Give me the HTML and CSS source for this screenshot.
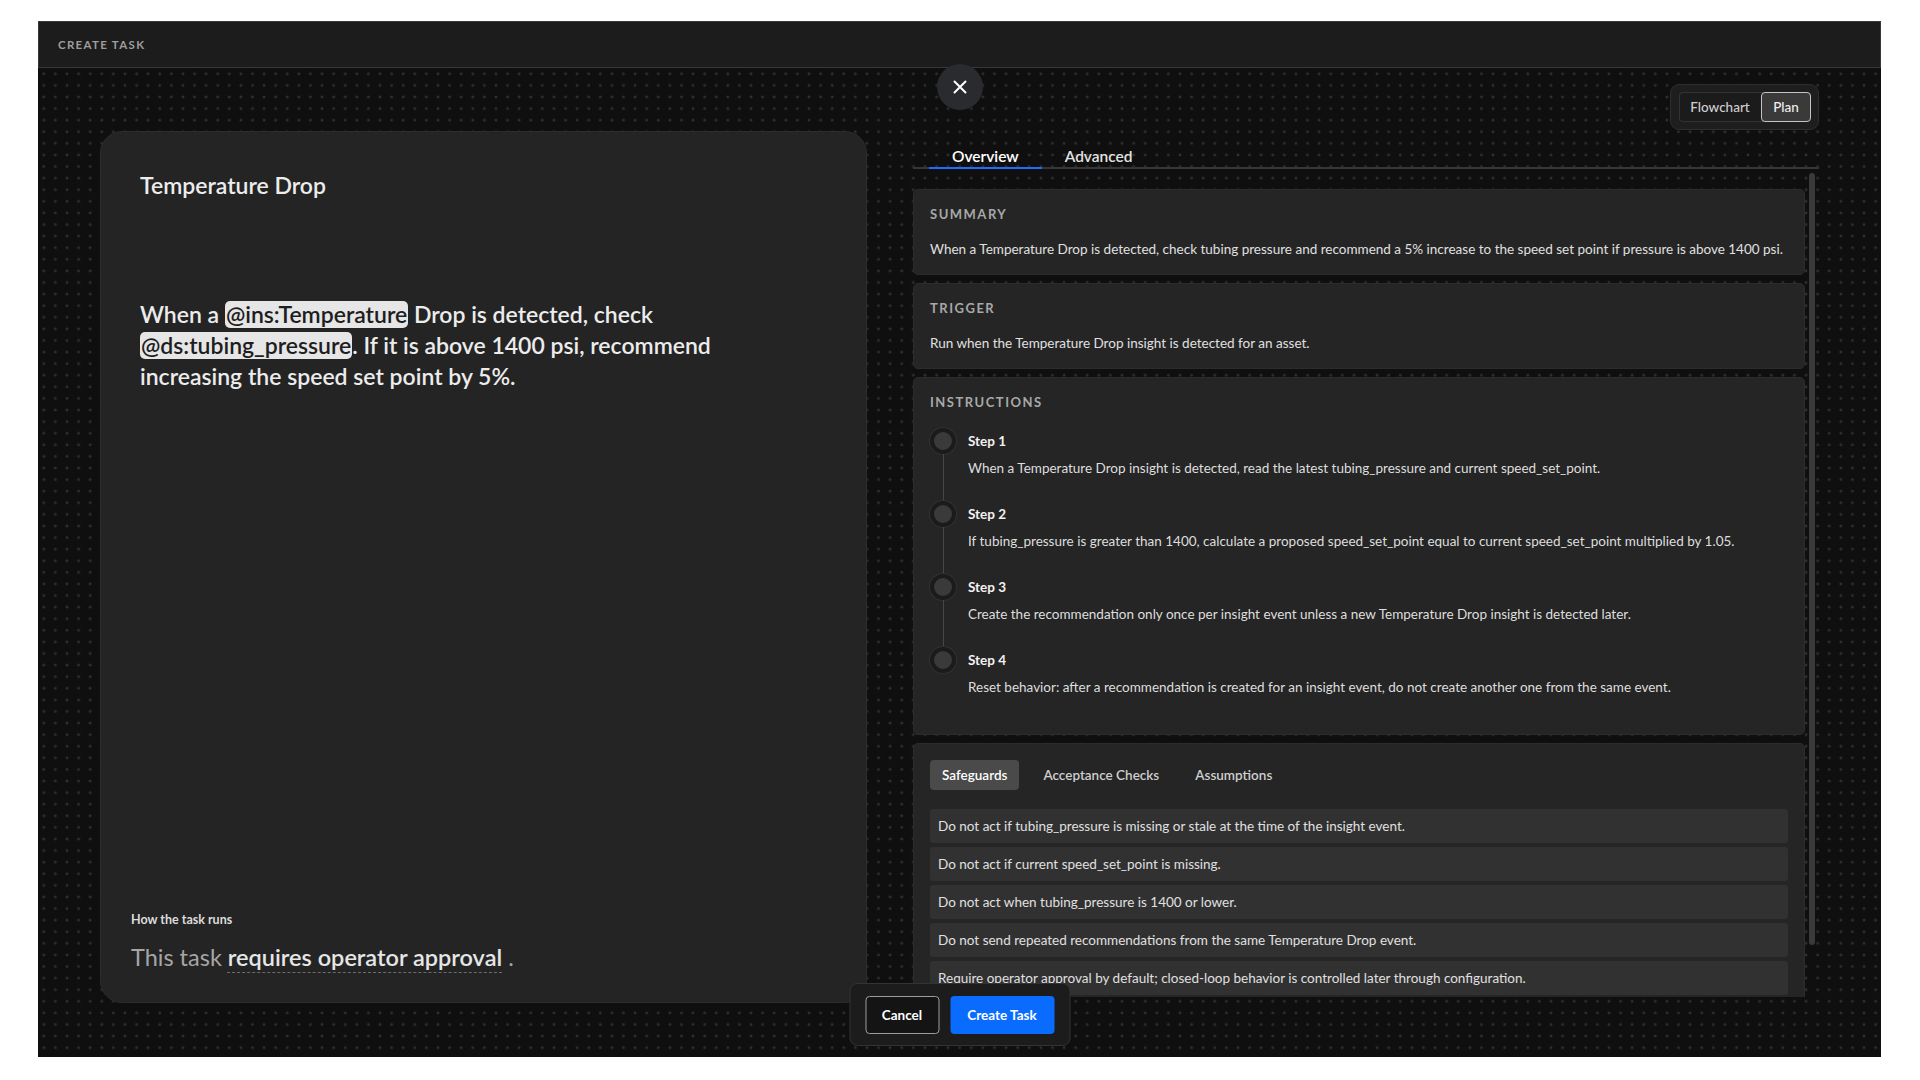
FILE: index.html
```html
<!DOCTYPE html>
<html lang="en">
<head>
    <meta charset="UTF-8">
    <meta name="viewport" content="width=device-width, initial-scale=1.0">
    <title>Create Task</title>
    <link rel="stylesheet" href="styles.css">
</head>
<body>

<div class="app">
    <header class="topbar">
        <span class="topbar-title">CREATE TASK</span>
    </header>

    <main class="workspace">
        <button class="close-btn" aria-label="Close">
            <svg width="14" height="14" viewBox="0 0 14 14">
                <path d="M1.5 1.5 L12.5 12.5 M12.5 1.5 L1.5 12.5" stroke="#fff" stroke-width="2" stroke-linecap="round" fill="none"/>
            </svg>
        </button>

        <section class="editor-card">
            <div class="editor">
                <h1 class="task-name">Temperature Drop</h1>
                <p class="prompt">When a <span class="mention">@ins:Temperature</span> Drop is detected, check <span class="mention">@ds:tubing_pressure</span>. If it is above 1400 psi, recommend increasing the speed set point by 5%.</p>
            </div>
            <div class="runs">
                <div class="runs-label">How the task runs</div>
                <p class="runs-text">This task <span class="runs-mode">requires operator approval</span> .</p>
            </div>
        </section>

        <section class="plan">
            <div class="view-switch-row">
                <div class="view-switch">
                    <div class="switch-group">
                        <button class="switch-btn">Flowchart</button>
                        <button class="switch-btn active">Plan</button>
                    </div>
                </div>
            </div>

            <nav class="tabs">
                <button class="tab active">Overview</button>
                <button class="tab">Advanced</button>
            </nav>

            <div class="plan-body">
                <div class="plan-scroll">
                    <div class="card">
                        <div class="card-title">Summary</div>
                        <p class="card-text">When a Temperature Drop is detected, check tubing pressure and recommend a 5% increase to the speed set point if pressure is above 1400 psi.</p>
                    </div>

                    <div class="card">
                        <div class="card-title">Trigger</div>
                        <p class="card-text">Run when the Temperature Drop insight is detected for an asset.</p>
                    </div>

                    <div class="card">
                        <div class="card-title">Instructions</div>
                        <div class="steps">
                            <div class="step">
                                <div class="step-marker"><span class="step-dot"></span><span class="step-line"></span></div>
                                <div class="step-body">
                                    <div class="step-title">Step 1</div>
                                    <div class="step-text">When a Temperature Drop insight is detected, read the latest tubing_pressure and current speed_set_point.</div>
                                </div>
                            </div>
                            <div class="step">
                                <div class="step-marker"><span class="step-dot"></span><span class="step-line"></span></div>
                                <div class="step-body">
                                    <div class="step-title">Step 2</div>
                                    <div class="step-text">If tubing_pressure is greater than 1400, calculate a proposed speed_set_point equal to current speed_set_point multiplied by 1.05.</div>
                                </div>
                            </div>
                            <div class="step">
                                <div class="step-marker"><span class="step-dot"></span><span class="step-line"></span></div>
                                <div class="step-body">
                                    <div class="step-title">Step 3</div>
                                    <div class="step-text">Create the recommendation only once per insight event unless a new Temperature Drop insight is detected later.</div>
                                </div>
                            </div>
                            <div class="step">
                                <div class="step-marker"><span class="step-dot"></span><span class="step-line"></span></div>
                                <div class="step-body">
                                    <div class="step-title">Step 4</div>
                                    <div class="step-text">Reset behavior: after a recommendation is created for an insight event, do not create another one from the same event.</div>
                                </div>
                            </div>
                        </div>
                    </div>

                    <div class="card">
                        <div class="subtabs">
                            <button class="subtab active">Safeguards</button>
                            <button class="subtab">Acceptance Checks</button>
                            <button class="subtab">Assumptions</button>
                        </div>
                        <ul class="guard-list">
                            <li class="guard">Do not act if tubing_pressure is missing or stale at the time of the insight event.</li>
                            <li class="guard">Do not act if current speed_set_point is missing.</li>
                            <li class="guard">Do not act when tubing_pressure is 1400 or lower.</li>
                            <li class="guard">Do not send repeated recommendations from the same Temperature Drop event.</li>
                            <li class="guard">Require operator approval by default; closed-loop behavior is controlled later through configuration.</li>
                        </ul>
                    </div>
                </div>
                <div class="scrollbar"></div>
            </div>
        </section>

        <div class="actions">
            <button class="btn btn-cancel">Cancel</button>
            <button class="btn btn-primary">Create Task</button>
        </div>
    </main>
</div>

</body>
</html>
```

FILE: styles.css
```css
body {
    margin: 0;
    background-color: #fff;
    font-family: Lato, "Liberation Sans", sans-serif;
    color: #e0e0e0;
}
button {
    font-family: inherit;
    cursor: pointer;
}
.app {
    margin: 21px 39px 0 38px;
    height: 1036px;
    display: flex;
    flex-direction: column;
    background-color: #0f0f0f;
}
.topbar {
    height: 47px;
    box-sizing: border-box;
    display: flex;
    align-items: center;
    padding-left: 19px;
    background-color: #1c1c1c;
    border: 1px solid #383838;
}
.topbar-title {
    font-size: 11.5px;
    font-weight: 700;
    letter-spacing: 1.3px;
    color: #9d9d9d;
}

/* dotted canvas */
.workspace {
    position: relative;
    flex: 1;
    display: grid;
    grid-template-columns: 767px 906px;
    column-gap: 46px;
    padding: 0 62px;
    background-color: #0f0f0f;
    background-image: radial-gradient(circle at center, #2f2f2f 1.2px, transparent 1.7px);
    background-size: 11.6px 11.6px;
}
.close-btn {
    position: absolute;
    top: -4px;
    left: 50%;
    transform: translateX(-50%);
    width: 46px;
    height: 46px;
    border: none;
    border-radius: 50%;
    background-color: #2a2b2e;
    display: flex;
    align-items: center;
    justify-content: center;
    padding: 0;
}

/* left: prompt editor */
.editor-card {
    margin: 63px 0 54px;
    box-sizing: border-box;
    background-color: #242424;
    border: 1px solid #2c2c2c;
    border-radius: 22px;
    display: flex;
    flex-direction: column;
    justify-content: space-between;
}
.editor {
    padding: 40px 39px 0;
}
.task-name {
    margin: 0;
    font-size: 23px;
    font-weight: 600;
    line-height: 26px;
    color: #ececec;
}
.prompt {
    margin: 101px 0 0;
    max-width: 640px;
    font-size: 23px;
    font-weight: 600;
    line-height: 31px;
    color: #ececec;
}
.mention {
    display: inline-block;
    line-height: 27px;
    background-color: #e6e6e6;
    color: #1e1e1e;
    border-radius: 5px;
    padding: 0 1px;
}
.runs {
    padding: 0 30px 31px;
}
.runs-label {
    font-size: 12.5px;
    font-weight: 700;
    line-height: 16px;
    color: #dcdcdc;
    margin-bottom: 15px;
}
.runs-text {
    margin: 0;
    font-size: 23.5px;
    line-height: 28px;
    color: #a6a6a6;
}
.runs-mode {
    font-weight: 600;
    color: #e6e6e6;
    text-decoration: underline dashed #6c6c6c;
    text-decoration-thickness: 1px;
    text-underline-offset: 6px;
}

/* right: plan */
.plan {
    display: flex;
    flex-direction: column;
    padding-top: 16px;
    min-width: 0;
}
.view-switch-row {
    display: flex;
    justify-content: flex-end;
}
.view-switch {
    box-sizing: border-box;
    height: 46px;
    padding: 7px 7px 7px 8px;
    background-color: #1e1e1e;
    border: 1px solid #2d2d2d;
    border-radius: 9px;
}
.switch-group {
    display: flex;
    height: 30px;
    border-radius: 4px;
    background-color: #1b1b1b;
    box-shadow: inset 0 0 0 1px #333;
}
.switch-btn {
    box-sizing: border-box;
    width: 82px;
    height: 30px;
    padding: 0;
    border: none;
    background: none;
    font-size: 13.5px;
    font-weight: 500;
    color: #cfcfcf;
}
.switch-btn.active {
    width: 50px;
    background-color: #3a3a3a;
    border: 1.5px solid #c4c4c4;
    border-radius: 4px;
    color: #eee;
}
.tabs {
    display: flex;
    margin-top: 15px;
    padding-left: 16px;
    border-bottom: 2px solid #363636;
}
.tab {
    padding: 0 23px;
    margin-bottom: -2px;
    border: none;
    border-bottom: 2px solid transparent;
    background: none;
    font-size: 15.5px;
    font-weight: 600;
    line-height: 22px;
    color: #e2e2e2;
}
.tab.active {
    border-bottom-color: #1d6cff;
    color: #fff;
}
.plan-body {
    display: flex;
    margin-top: 4px;
    height: 824px;
}
.plan-scroll {
    width: 892px;
    flex-shrink: 0;
    box-sizing: border-box;
    padding-top: 16px;
    overflow: hidden;
}
.scrollbar {
    width: 6px;
    height: 772px;
    margin-left: 4px;
    background-color: #3a3a3a;
    border-radius: 3px;
}
.card {
    background-color: #252525;
    border: 1px solid #2c2c2c;
    border-radius: 5px;
    padding: 16px 16px 17px;
    margin-bottom: 8px;
}
.card-title {
    font-size: 13px;
    font-weight: 700;
    line-height: 16px;
    letter-spacing: 1.5px;
    text-transform: uppercase;
    color: #a8a8a8;
    margin-bottom: 19px;
}
.card-text {
    margin: 0;
    font-size: 13.5px;
    line-height: 16px;
    color: #e0e0e0;
}
.steps {
    margin-top: -1px;
}
.step {
    display: flex;
    gap: 12px;
}
.step-marker {
    width: 26px;
    flex-shrink: 0;
    display: flex;
    flex-direction: column;
    align-items: center;
}
.step-dot {
    width: 26px;
    height: 26px;
    box-sizing: border-box;
    border-radius: 50%;
    background-color: #3a3a3a;
    border: 4px solid #1b1b1b;
    box-shadow: 0 0 0 1px #313131;
}
.step-line {
    flex: 1;
    width: 1px;
    background-color: #474747;
}
.step-body {
    padding-bottom: 25px;
}
.step:last-child .step-line {
    display: none;
}
.step:last-child .step-body {
    padding-bottom: 22px;
}
.step-title {
    font-size: 13.5px;
    font-weight: 700;
    line-height: 26px;
    color: #f2f2f2;
    margin-bottom: 6px;
}
.step-text {
    font-size: 13.5px;
    line-height: 16px;
    color: #dedede;
}
.subtabs {
    display: flex;
    gap: 12px;
}
.subtab {
    padding: 0 12px;
    border: none;
    border-radius: 4px;
    background: none;
    font-size: 13.5px;
    font-weight: 600;
    line-height: 30px;
    color: #cfcfcf;
}
.subtab.active {
    background-color: #4a4a4a;
    color: #fff;
}
.guard-list {
    list-style: none;
    margin: 19px 0 0;
    padding: 0;
}
.guard {
    background-color: #313131;
    border-radius: 3px;
    padding: 9px 8px;
    margin-bottom: 4px;
    font-size: 13.5px;
    line-height: 16px;
    color: #e0e0e0;
}

/* floating footer */
.actions {
    position: absolute;
    left: 50%;
    bottom: 11px;
    transform: translateX(-50%);
    display: flex;
    gap: 11px;
    padding: 12px 15px 11px;
    background-color: #1c1c1c;
    border: 1px solid #333;
    border-radius: 8px;
}
.btn {
    height: 38px;
    border-radius: 4px;
    font-size: 13.5px;
    font-weight: 700;
    color: #fff;
}
.btn-cancel {
    width: 74px;
    background-color: #141414;
    border: 1.5px solid #9c9c9c;
}
.btn-primary {
    width: 104px;
    background-color: #0a6cff;
    border: none;
}
```
